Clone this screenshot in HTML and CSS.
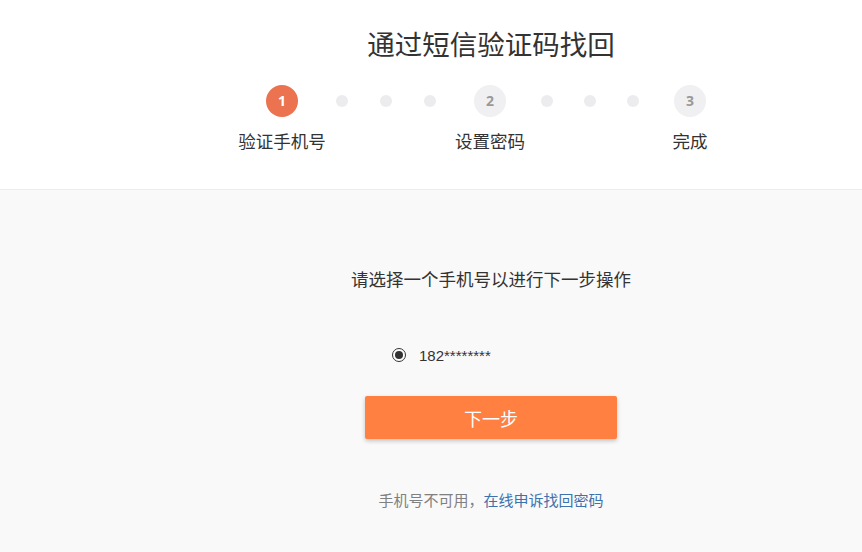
FILE: index.html
```html
<!DOCTYPE html>
<html lang="zh-CN">
<head>
<meta charset="utf-8">
<title>通过短信验证码找回</title>
<link rel="stylesheet" href="styles.css">
</head>
<body>
<header class="header">
  <h1 class="title">通过短信验证码找回</h1>
  <div class="steps">
    <div class="step">
      <span class="circle circle-active">1</span>
      <span class="step-label">验证手机号</span>
    </div>
    <div class="dots">
      <span class="dot"></span><span class="dot"></span><span class="dot"></span>
    </div>
    <div class="step">
      <span class="circle">2</span>
      <span class="step-label">设置密码</span>
    </div>
    <div class="dots dots-narrow">
      <span class="dot"></span><span class="dot"></span><span class="dot"></span>
    </div>
    <div class="step">
      <span class="circle">3</span>
      <span class="step-label">完成</span>
    </div>
  </div>
</header>
<main class="main">
  <p class="prompt">请选择一个手机号以进行下一步操作</p>
  <label class="phone-row">
    <span class="radio"><span class="radio-dot"></span></span>
    <span class="phone">182********</span>
  </label>
  <button class="next-btn" type="button">下一步</button>
  <p class="footer-note">手机号不可用，<a class="appeal" href="#">在线申诉找回密码</a></p>
</main>
</body>
</html>
```
FILE: styles.css
```css
html {
  background: #f9f9f9;
}
body {
  margin: 0;
  font-family: "Noto Sans CJK SC", "Noto Sans", sans-serif;
  color: #333;
  min-height: 552px;
  background: #f9f9f9;
}
.header {
  background: #fff;
  height: 189px;
  border-bottom: 1px solid #ececec;
  box-sizing: content-box;
  display: flex;
  flex-direction: column;
  align-items: center;
  padding-left: 120px;
}
.title {
  margin: 25px 0 0;
  font-size: 27.5px;
  line-height: 36px;
  font-weight: 400;
  color: #333;
}
.steps {
  margin-top: 24px;
  margin-right: 10px;
  display: flex;
  align-items: flex-start;
}
.step {
  width: 32px;
  display: flex;
  flex-direction: column;
  align-items: center;
}
.circle {
  width: 32px;
  height: 32px;
  border-radius: 50%;
  background: #f0f0f2;
  color: #999;
  font-family: "Open Sans", "Noto Sans", sans-serif;
  font-weight: 700;
  font-size: 14px;
  line-height: 32px;
  text-align: center;
}
.circle-active {
  background: #eb7350;
  color: #fff;
}
.step-label {
  margin-top: 12px;
  white-space: nowrap;
  font-size: 17.5px;
  line-height: 24px;
  color: #333;
}
.dots {
  display: flex;
  gap: 32px;
  padding: 10px 38px 0;
}
.dots-narrow {
  gap: 31px;
  padding: 10px 35px 0;
}
.dot {
  width: 12px;
  height: 12px;
  border-radius: 50%;
  background: #ececef;
}
.main {
  display: flex;
  flex-direction: column;
  align-items: center;
  padding-left: 120px;
  padding-top: 77px;
}
.prompt {
  margin: 0;
  font-size: 17.5px;
  line-height: 24px;
  color: #333;
}
.phone-row {
  margin-top: 54px;
  width: 252px;
  box-sizing: border-box;
  padding-left: 27px;
  display: flex;
  align-items: center;
  height: 20px;
}
.radio {
  width: 14px;
  height: 14px;
  box-sizing: border-box;
  border: 1.5px solid #333;
  border-radius: 50%;
  display: flex;
  align-items: center;
  justify-content: center;
  background: #fff;
}
.radio-dot {
  width: 8px;
  height: 8px;
  border-radius: 50%;
  background: #333;
}
.phone {
  margin-left: 13px;
  font-family: "Liberation Sans", Arial, sans-serif;
  font-size: 15px;
  color: #333;
}
.next-btn {
  margin-top: 31px;
  width: 252px;
  height: 43px;
  border: none;
  border-radius: 2px;
  background: #ff8040;
  color: #fff;
  font-family: "Noto Sans CJK SC", sans-serif;
  font-size: 18px;
  box-shadow: 0 2px 4px rgba(0, 0, 0, 0.22);
  cursor: pointer;
}
.footer-note {
  margin: 51px 0 0;
  font-size: 15px;
  line-height: 20px;
  color: #808080;
}
.appeal {
  color: #3d72ad;
  text-decoration: none;
}
```
